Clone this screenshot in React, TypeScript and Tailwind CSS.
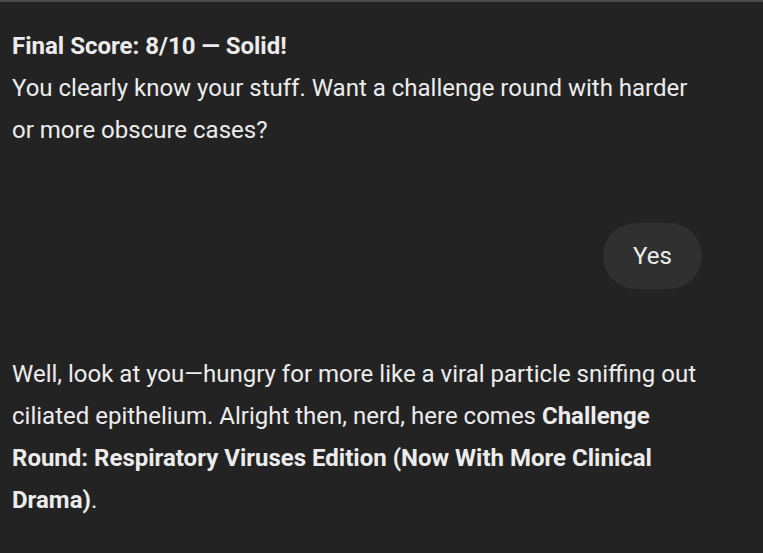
export default function App() {
  return (
    <div
      className="min-h-screen w-full bg-[#232323] border-t-2 border-[#4a4a4a] text-[#ececec]"
      style={{ fontFamily: "Roboto, 'Noto Sans', sans-serif" }}
    >
      <div className="w-[702px] pl-3 pt-[23px] text-[24px] leading-[42px]">
        {/* Assistant message */}
        <div>
          <p className="font-bold">Final Score: 8/10 — Solid!</p>
          <p>You clearly know your stuff. Want a challenge round with harder or more obscure cases?</p>
        </div>

        {/* User message */}
        <div className="flex justify-end mt-[72px]">
          <div className="h-[66px] w-[99px] rounded-full bg-[#303030] flex items-center justify-center">
            Yes
          </div>
        </div>

        {/* Assistant reply */}
        <p className="mt-[64px]">
          Well, look at you—hungry for more like a viral particle sniffing out ciliated epithelium. Alright then, nerd, here comes{" "}
          <strong className="font-bold">Challenge Round: Respiratory Viruses Edition (Now With More Clinical Drama)</strong>.
        </p>
      </div>
    </div>
  );
}
